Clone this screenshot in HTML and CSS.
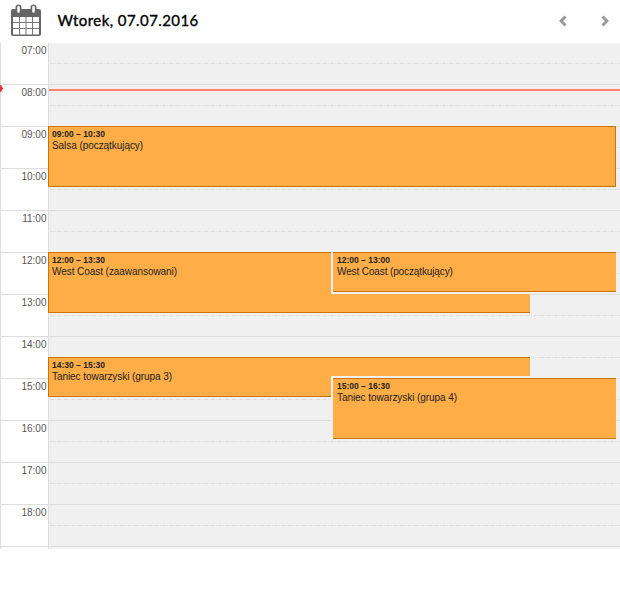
FILE: index.html
```html
<!DOCTYPE html>
<html lang="pl">
<head>
<meta charset="utf-8">
<title>Wtorek, 07.07.2016</title>
<link rel="stylesheet" href="styles.css">
</head>
<body>
<header class="toolbar">
  <svg class="calendar-icon" width="32" height="34" viewBox="0 0 32 34">
    <path d="M3 5H29Q31 5 31 7V30Q31 32 29 32H3Q1 32 1 30V7Q1 5 3 5Z" fill="#666"/>
    <path d="M3 13H29V30.500H3Z" fill="#fff"/>
    <path d="M9.500 13V31M16 13V31M22.500 13V31M3 18.500H29M3 24.500H29" stroke="#777" fill="none"/>
    <rect x="5.500" y=".5" width="6" height="9.500" rx="3" fill="#666"/>
    <rect x="20.500" y=".5" width="6" height="9.500" rx="3" fill="#666"/>
    <path d="M8.500 3V7.500M23.500 3V7.500" stroke="#fff" stroke-width="2.500" stroke-linecap="round"/>
  </svg>
  <h1 class="title">Wtorek, 07.07.2016</h1>
  <nav class="nav">
    <svg width="8" height="12" viewBox="0 0 8 12"><path d="M6.500 1.500L2 6L6.500 10.500"/></svg>
    <svg width="8" height="12" viewBox="0 0 8 12"><path d="M1.500 1.500L6 6L1.500 10.500"/></svg>
  </nav>
</header>
<main class="calendar">
  <div class="slot"><span class="hour">07:00</span><span class="cell"></span></div>
  <div class="slot"><span class="hour">08:00</span><span class="cell"></span></div>
  <div class="slot"><span class="hour">09:00</span><span class="cell"></span></div>
  <div class="slot"><span class="hour">10:00</span><span class="cell"></span></div>
  <div class="slot"><span class="hour">11:00</span><span class="cell"></span></div>
  <div class="slot"><span class="hour">12:00</span><span class="cell"></span></div>
  <div class="slot"><span class="hour">13:00</span><span class="cell"></span></div>
  <div class="slot"><span class="hour">14:00</span><span class="cell"></span></div>
  <div class="slot"><span class="hour">15:00</span><span class="cell"></span></div>
  <div class="slot"><span class="hour">16:00</span><span class="cell"></span></div>
  <div class="slot"><span class="hour">17:00</span><span class="cell"></span></div>
  <div class="slot"><span class="hour">18:00</span><span class="cell"></span></div>
  <div class="slot"><span class="hour"></span><span class="cell"></span></div>
  <div class="now-line"></div>
  <article class="event salsa"><div class="time">09:00 – 10:30</div><div class="name">Salsa (początkujący)</div></article>
  <article class="event wcs-advanced"><div class="time">12:00 – 13:30</div><div class="name">West Coast (zaawansowani)</div></article>
  <article class="event inset wcs-beginner"><div class="time">12:00 – 13:00</div><div class="name">West Coast (początkujący)</div></article>
  <article class="event group-3"><div class="time">14:30 – 15:30</div><div class="name">Taniec towarzyski (grupa 3)</div></article>
  <article class="event inset group-4"><div class="time">15:00 – 16:30</div><div class="name">Taniec towarzyski (grupa 4)</div></article>
  <svg class="now-marker" width="3" height="7" viewBox="0 0 3 7"><path d="M0 0H1L2 2L3 3V4L2 5L1 7H0Z" fill="#d33"/></svg>
</main>
</body>
</html>
```
FILE: styles.css
```css
* { box-sizing: border-box; }
body { margin: 0; background: #fff; font-family: "Liberation Sans", Arial, sans-serif; }
.toolbar { display: flex; align-items: center; height: 43px; padding: 0 11px 2px 10px; }
.calendar-icon { flex: none; }
.title { margin: -2px 0 0 15.500px; font: 400 15px/20px Lato, sans-serif; -webkit-text-stroke: .35px #000; letter-spacing: .42px; color: #000; white-space: nowrap; }
.nav { display: flex; gap: 34px; margin-left: auto; }
.nav path { fill: none; stroke: #999; stroke-width: 3; }
.calendar { position: relative; height: 506px; border-left: 1px solid #ddd; }
.slot { display: flex; height: 42px; border-top: 1px solid #ddd; }
.slot:first-child { height: 41px; border-top: 0; }
.slot:nth-child(13) { height: 3px; overflow: hidden; }
.hour { width: 48px; padding: 2px 1.500px 0 0; border-right: 1px solid #ddd; font-size: 10px; line-height: 12px; text-align: right; color: #555; }
.cell { flex: 1; background: #f0f0f0; }
.cell::before { content: ""; display: block; height: 1px; margin: 20px 0 0 1px; background: repeating-linear-gradient(90deg, #ddd 0 4px, #f0f0f0 4px 5px, #ddd 5px 6px, #f0f0f0 6px 7px); }
.now-line { position: absolute; top: 46px; left: 48px; right: 0; height: 2px; background: #ff806c; }
.now-marker { position: absolute; top: 42px; left: -1px; }
.event { position: absolute; left: 47px; width: 482px; padding: 2px 3px; background: #ffad46; border: 1px solid #cb7403; border-right: 0; color: #222; }
.time { font-size: 8.500px; line-height: 11px; font-weight: bold; white-space: nowrap; }
.name { margin-top: -1px; font-size: 10px; line-height: 13px; letter-spacing: -.06px; white-space: nowrap; }
.salsa { top: 83px; width: 568px; height: 61px; border-right: 1px solid #cb7403; }
.wcs-advanced { top: 209px; height: 61px; }
.group-3 { top: 314px; height: 40px; }
.inset { left: 332px; width: 283px; padding-left: 4px; border-left: 0; box-shadow: -2px -2px #f0f0f0, -2px 2px #f0f0f0; }
.wcs-beginner { top: 209px; height: 40px; }
.wcs-beginner .name { letter-spacing: -.12px; }
.group-4 { top: 335px; height: 61px; }
```
